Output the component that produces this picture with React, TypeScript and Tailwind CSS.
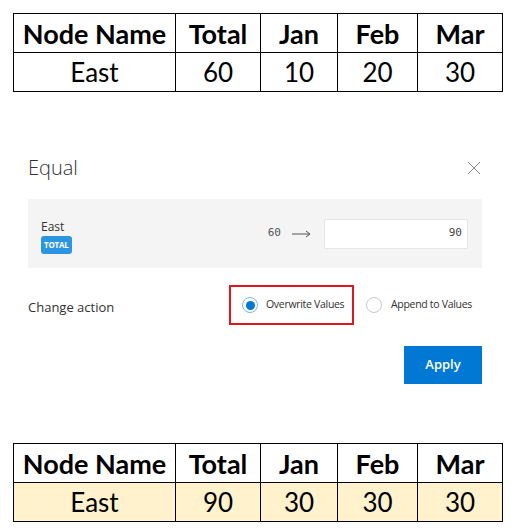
import React from "react";

const cols = [162, 85, 77, 80, 85];
const heads = ["Node Name", "Total", "Jan", "Feb", "Mar"];

function DataTable({ values, highlight }: { values: string[]; highlight?: boolean }) {
  return (
    <table
      className="border-collapse table-fixed text-black"
      style={{ fontFamily: "Lato, 'Open Sans', sans-serif" }}
    >
      <colgroup>
        {cols.map((w, i) => (
          <col key={i} style={{ width: w }} />
        ))}
      </colgroup>
      <tbody>
        <tr className="h-[39px]">
          {heads.map((h) => (
            <td key={h} className="border border-black text-center font-bold text-[27px] leading-none p-0">
              {h}
            </td>
          ))}
        </tr>
        <tr className={`h-[39px] ${highlight ? "bg-[#fff2cc]" : "bg-white"}`}>
          {values.map((v, i) => (
            <td key={i} className="border border-black text-center text-[26px] leading-none p-0">
              {v}
            </td>
          ))}
        </tr>
      </tbody>
    </table>
  );
}

export default function App() {
  return (
    <div className="w-[514px] h-[532px] bg-white overflow-hidden" style={{ fontFamily: "'Open Sans', 'Noto Sans', sans-serif" }}>
      <div className="pt-[13px] pl-[13px]">
        <DataTable values={["East", "60", "10", "20", "30"]} />
      </div>

      <div className="ml-[28px] w-[454px] mt-[59px]">
        <div className="h-[34px] flex items-center justify-between">
          <span className="text-[20px] font-light text-[#323130] leading-none">Equal</span>
          <svg width="14" height="14" viewBox="0 0 14 14" className="mr-[1px]">
            <path d="M1 1 L13 13 M13 1 L1 13" stroke="#8a8886" strokeWidth="1" fill="none" />
          </svg>
        </div>

        <div className="mt-[14px] h-[69px] bg-[#f4f4f4] flex items-center justify-between pl-[13px] pr-[14px]">
          <div className="flex flex-col items-start pt-[5px]">
            <span className="text-[12px] leading-[16px] text-[#323130]">East</span>
            <span className="mt-[1px] h-[18px] px-[3px] rounded-[3px] bg-[#2b95e1] text-white text-[8px] font-bold flex items-center leading-none tracking-[-0.2px]">
              TOTAL
            </span>
          </div>
          <div className="flex items-center">
            <span className="text-[11px] text-[#555]" style={{ fontFamily: "'DejaVu Sans Mono', monospace" }}>60</span>
            <svg width="19" height="8" viewBox="0 0 19 8" className="ml-[11px]">
              <path d="M0 4 H18 M14 1 L18 4 L14 7" stroke="#555" strokeWidth="1" fill="none" />
            </svg>
            <div
              className="ml-[13px] w-[144px] h-[30px] bg-white border border-[#e6e6e6] rounded-[2px] flex items-center justify-end pr-[5px] text-[11px] text-[#444]"
              style={{ fontFamily: "'DejaVu Sans Mono', monospace" }}
            >
              90
            </div>
          </div>
        </div>

        <div className="mt-[17px] h-[40px] flex items-center">
          <span className="w-[201px] mt-[6px] text-[13px] text-[#323130]">Change action</span>
          <div className="h-[40px] w-[125px] border-2 border-[#e3141e] flex items-center pl-[11px]">
            <span className="w-[16px] h-[16px] rounded-full border border-[#7eb8e6] flex items-center justify-center">
              <span className="w-[9px] h-[9px] rounded-full bg-[#0078d4]" />
            </span>
            <span className="ml-[8px] text-[10.5px] text-[#323130] tracking-[-0.3px]">Overwrite Values</span>
          </div>
          <div className="ml-[12px] flex items-center">
            <span className="w-[16px] h-[16px] rounded-full border border-[#c8c8c8] bg-white" />
            <span className="ml-[9px] text-[10.5px] text-[#323130] tracking-[-0.3px]">Append to Values</span>
          </div>
        </div>

        <div className="mt-[21px] flex justify-end">
          <button className="w-[78px] h-[38px] bg-[#0078d4] text-white text-[13px] font-semibold">Apply</button>
        </div>
      </div>

      <div className="mt-[59px] pl-[13px]">
        <DataTable values={["East", "90", "30", "30", "30"]} highlight />
      </div>
    </div>
  );
}
